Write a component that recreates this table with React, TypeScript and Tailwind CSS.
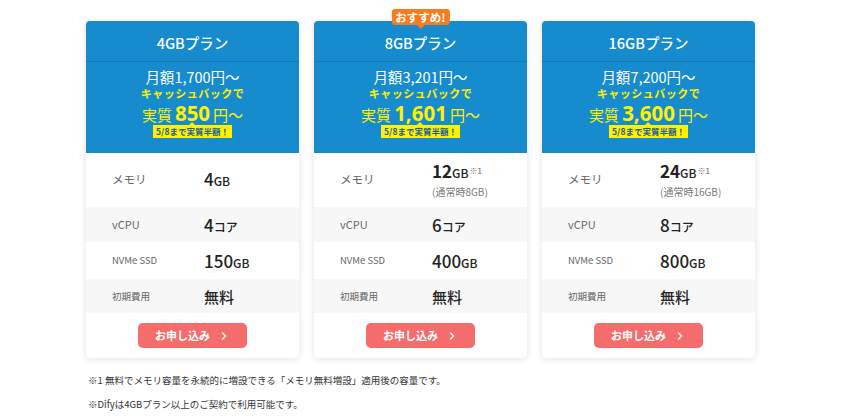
import { ChevronRight } from 'lucide-react'

type Plan = {
  name: string
  monthly: string
  real: string
  memory: string
  memoryNote?: string
  cpu: string
  ssd: string
  recommended?: boolean
}

const plans: Plan[] = [
  { name: '4GBプラン', monthly: '1,700', real: '850', memory: '4', cpu: '4', ssd: '150' },
  {
    name: '8GBプラン',
    monthly: '3,201',
    real: '1,601',
    memory: '12',
    memoryNote: '(通常時8GB)',
    cpu: '6',
    ssd: '400',
    recommended: true,
  },
  {
    name: '16GBプラン',
    monthly: '7,200',
    real: '3,600',
    memory: '24',
    memoryNote: '(通常時16GB)',
    cpu: '8',
    ssd: '800',
  },
]

function Row({ label, gray, tall, labelSize, children }: { label: string; gray?: boolean; tall?: string; labelSize: string; children: React.ReactNode }) {
  return (
    <div className={`flex items-center ${tall} ${gray ? 'bg-[#f7f7f7]' : 'bg-white'}`}>
      <div className={`w-[118px] shrink-0 pl-[26px] text-[#666] ${labelSize}`}>{label}</div>
      <div className="text-[#222]">{children}</div>
    </div>
  )
}

function PlanCard({ plan }: { plan: Plan }) {
  return (
    <div className="relative w-[213px] shrink-0 rounded-[4px] bg-white shadow-[0_1px_6px_rgba(0,0,0,0.12)]">
      {plan.recommended && (
        <div className="absolute left-1/2 top-[-12px] -translate-x-1/2">
          <div className="rounded-[3px] bg-[#f57d1f] px-[4px] h-[16px] leading-[16px] text-[11.5px] font-bold text-white whitespace-nowrap">
            おすすめ!
          </div>
          <div className="mx-auto h-0 w-0 border-x-[4px] border-t-[4px] border-x-transparent border-t-[#f57d1f]" />
        </div>
      )}
      <div className="rounded-t-[4px] bg-[#168bcd] text-center">
        <div className="h-[41px] pt-[12px] text-[14.5px] font-medium leading-[20px] text-white border-b border-[#1479b6]">
          {plan.name}
        </div>
        <div className="h-[91px] pt-[5px]">
          <div className="text-[14.5px] leading-[19px] text-white">月額{plan.monthly}円〜</div>
          <div className="text-[11px] font-bold leading-[14px] tracking-[0.5px] text-[#fff100]">キャッシュバックで</div>
          <div className="flex h-[20px] items-baseline justify-center text-[#fff100] leading-[20px] mt-[3px]">
            <span className="text-[15px] leading-[20px]">実質</span>
            <span className="mx-[3px] font-['Noto_Sans',sans-serif] text-[20.5px] font-bold leading-[20px]">{plan.real}</span>
            <span className="text-[15px] leading-[20px]">円〜</span>
          </div>
          <div className="relative mx-auto mt-[2px] w-fit bg-[#fff100] px-[3px] text-[8.5px] font-bold leading-[13px] text-[#1b5f92]">
            <span className="absolute left-1/2 top-[-3px] h-0 w-0 -translate-x-1/2 border-x-[3px] border-b-[3px] border-x-transparent border-b-[#fff100]" />
            5/8まで実質半額！
          </div>
        </div>
      </div>
      <Row label="メモリ" tall="h-[54px]" labelSize="text-[11.5px]">
        <div className="leading-[20px]">
          <span className={`text-[17px] ${plan.memoryNote ? 'font-bold' : 'font-medium'}`}>{plan.memory}</span>
          <span className="text-[12px] font-medium">GB</span>
          {plan.memoryNote && <sup className="text-[8px] text-[#666] ml-[1px]">※1</sup>}
        </div>
        {plan.memoryNote && <div className="text-[10px] leading-[16px] text-[#777] mt-[1px]">{plan.memoryNote}</div>}
      </Row>
      <Row label="vCPU" gray tall="h-[35px]" labelSize="text-[11px]">
        <span className="text-[17px] font-medium">{plan.cpu}</span>
        <span className="text-[12px] font-medium">コア</span>
      </Row>
      <Row label="NVMe SSD" tall="h-[37px]" labelSize="text-[9.5px]">
        <span className="text-[17px] font-medium">{plan.ssd}</span>
        <span className="text-[12px] font-medium">GB</span>
      </Row>
      <Row label="初期費用" gray tall="h-[34px]" labelSize="text-[9.5px]">
        <span className="text-[15px] font-medium">無料</span>
      </Row>
      <div className="flex h-[45px] justify-center pt-[10px]">
        <button className="flex h-[25px] w-[109px] items-center justify-center gap-[8px] rounded-[5px] bg-[#f46c6c] text-[11px] font-bold text-white">
          <span>お申し込み</span>
          <ChevronRight className="h-[12px] w-[12px]" strokeWidth={3} />
        </button>
      </div>
    </div>
  )
}

export default function App() {
  return (
    <div className="h-[420px] w-[844px] bg-white font-['Noto_Sans_CJK_JP','Noto_Sans',sans-serif]">
      <div className="ml-[86px] flex gap-[15px] pt-[21px]">
        {plans.map((p) => (
          <PlanCard key={p.name} plan={p} />
        ))}
      </div>
      <div className="ml-[88px] mt-[10px] text-[9.5px] leading-[24px] text-[#333]">
        <p>※1 無料でメモリ容量を永続的に増設できる「メモリ無料増設」適用後の容量です。</p>
        <p>※Difyは4GBプラン以上のご契約で利用可能です。</p>
      </div>
    </div>
  )
}
